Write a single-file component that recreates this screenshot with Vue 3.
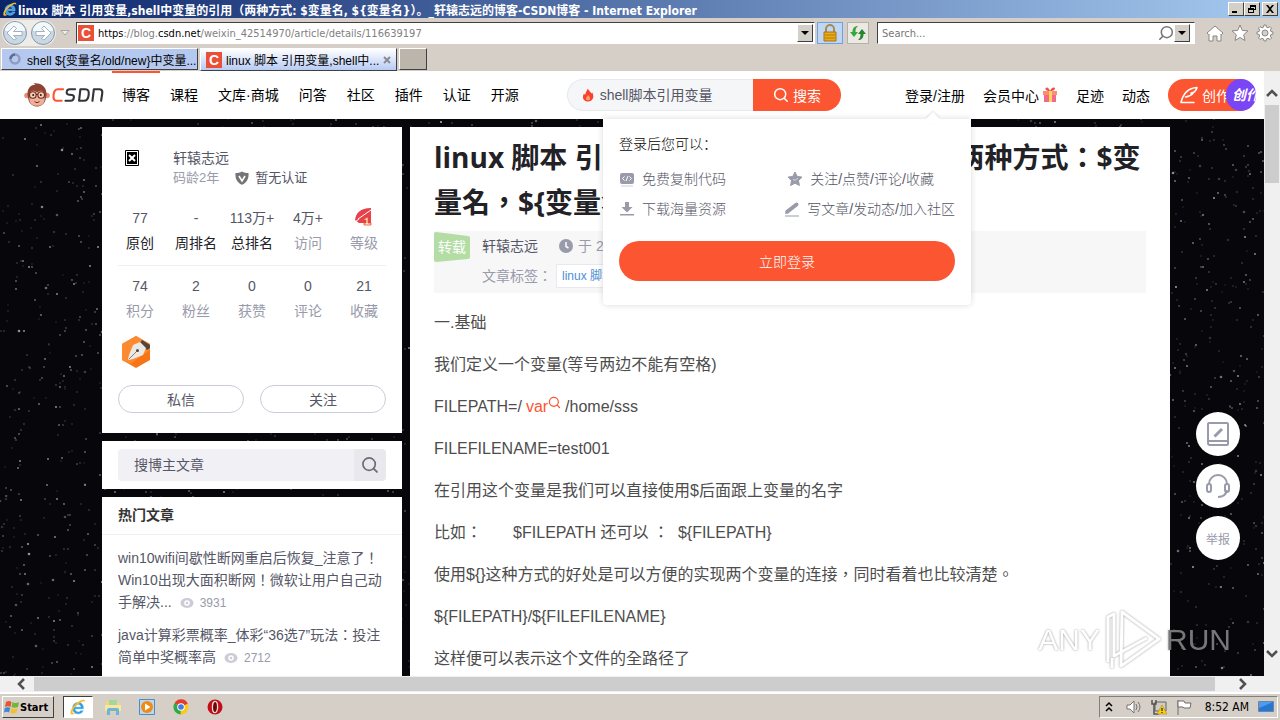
<template>
  <div class="screen">
    <!-- 公用图标 -->
    <svg class="symbols" aria-hidden="true">
      <symbol id="ie" viewBox="0 0 24 24">
        <path d="M19.6 14.6H8.4c.2 2.300 1.700 3.700 4 3.700 1.500 0 2.600-.6 3.300-1.700h3.600c-1 2.900-3.500 4.800-7 4.800-4.600 0-7.700-3.300-7.700-7.900C4.600 8.900 7.700 5.700 12.300 5.700c4.700 0 7.500 3.500 7.300 8.900zM8.500 12h7.300c-.2-2-1.600-3.200-3.600-3.200S8.800 10 8.500 12z" fill="#2d9be6" stroke="#a9dcf8" stroke-width=".7" />
        <path d="M2.600 21.600C-.6 17.500 8.700 5 17.500 2.700c3.200-.8 4.600.7 3.500 3.500.1-1.700-1.200-2.200-3.400-1.300C10.800 7.800 3.300 16.600 5 19.600c.6 1 2 .9 3.600.1-2.300 2.100-4.700 3.200-6 1.900z" fill="#f6bd2c" />
      </symbol>
      <symbol id="lens" viewBox="0 0 16 16">
        <circle cx="7.200" cy="7.200" r="5.500" fill="none" stroke="currentColor" stroke-width="1.500" />
        <path d="M11.200 11.200l3 3" fill="none" stroke="currentColor" stroke-width="1.600" stroke-linecap="round" />
      </symbol>
      <symbol id="eye" viewBox="0 0 14 12">
        <ellipse cx="7" cy="6" rx="6.500" ry="5" fill="#ccccd8" />
        <circle cx="7" cy="6" r="2.800" fill="#fff" />
        <circle cx="7" cy="6" r="1.300" fill="#ccccd8" />
      </symbol>
    </svg>

    <!-- 窗口标题栏 -->
    <header class="titlebar">
      <svg class="icon16"><use href="#ie" /></svg>
      <span class="titlebar-text">linux 脚本 引用变量,shell中变量的引用（两种方式: $变量名, ${变量名}）。_轩辕志远的博客-CSDN博客 - Internet Explorer</span>
      <div class="win-btns">
        <button aria-label="最小化"><svg viewBox="0 0 10 8"><path d="M1 6h5v2H1z" /></svg></button>
        <button aria-label="还原"><svg viewBox="0 0 10 8"><path d="M3 0h6v5H7v3H1V3h2zM4 2v1h3v1h1V2zM2 5v2h4V5z" fill-rule="evenodd" /></svg></button>
        <button class="win-close" aria-label="关闭"><svg viewBox="0 0 10 8"><path d="M1 0h2l2 2.500L7 0h2L6 4l3 4H7L5 5.500 3 8H1l3-4z" /></svg></button>
      </div>
    </header>

    <!-- 地址栏 -->
    <div class="toolbar">
      <div class="nav-arrows">
        <button aria-label="后退">
          <svg viewBox="0 0 26 26"><circle cx="13" cy="13" r="11.500" fill="#c9d8e4" stroke="#8797a5" /><path d="M3 11a10 9 0 0 1 20 0z" fill="#f3f8fb" /><path d="M5 13l7-7 2.500 2.500-3 3H20v4h-8.500l3 3L12 20z" fill="#fff" stroke="#8fa2b2" stroke-width=".8" /></svg>
        </button>
        <button aria-label="前进">
          <svg viewBox="0 0 26 26"><circle cx="13" cy="13" r="11.500" fill="#c9d8e4" stroke="#8797a5" /><path d="M3 11a10 9 0 0 1 20 0z" fill="#f3f8fb" /><path d="M21 13l-7-7-2.500 2.500 3 3H6v4h8.500l-3 3L14 20z" fill="#fff" stroke="#8fa2b2" stroke-width=".8" /></svg>
        </button>
      </div>
      <svg class="nav-more" viewBox="0 0 10 6"><path d="M1 .5h8L5 5z" fill="#eee" stroke="#aaa59c" /></svg>
      <div class="field address">
        <span class="favicon">C</span>
        <div class="address-edit">
          <input
            aria-label="地址"
            :value="editing ? url : ''"
            @focus="editing = true"
            @blur="editing = false"
          />
          <div v-if="!editing" class="address-show"><b>https</b>://blog.<b>csdn.net</b>/weixin_42514970/article/details/116639197</div>
        </div>
        <button class="drop" aria-label="历史记录"><svg viewBox="0 0 8 4"><path d="M0 0h8L4 4z" /></svg></button>
      </div>
      <button class="tool-btn active" aria-label="安全报告">
        <svg viewBox="0 0 18 18"><path d="M5 8V5a4 4 0 0 1 8 0v3" fill="none" stroke="#a98b4c" stroke-width="2" /><path d="M3 8h12v9H3z" fill="#e8a91d" stroke="#a8740b" /><path d="M4 11h10M4 14h10" stroke="#b97d08" /></svg>
      </button>
      <button class="tool-btn" aria-label="刷新">
        <svg viewBox="0 0 18 18"><path d="M1 8h2.500c0-4 2-6 5.500-6-2 1.500-2.500 3-2.500 6H9l-4 5z" fill="#35a83b" /><path d="M17 10h-2.500c0 4-2 6-5.500 6 2-1.500 2.500-3 2.500-6H9l4-5z" fill="#26862c" /></svg>
      </button>
      <div class="field search-field">
        <input type="text" placeholder="Search..." aria-label="Search" />
        <svg class="icon16 flip"><use href="#lens" /></svg>
        <button class="drop" aria-label="搜索选项"><svg viewBox="0 0 8 4"><path d="M0 0h8L4 4z" /></svg></button>
      </div>
      <div class="ie-tools">
        <button aria-label="主页"><svg viewBox="0 0 18 18"><path d="M9 2l8 7-1.500 1.500L15 10v7h-4v-5H7v5H3v-7l-.500.500L1 9z" /></svg></button>
        <button aria-label="收藏夹"><svg viewBox="0 0 18 18"><path d="M9 1l2.300 5.400 5.700.5-4.300 3.900 1.300 5.700L9 13.500 4 16.500l1.300-5.700L1 6.900l5.700-.5z" /></svg></button>
        <button aria-label="工具"><svg viewBox="0 0 18 18"><path d="M8 1h2l.5 2.200 1.500.6 2-1.200 1.500 1.500-1.200 2 .6 1.400L17 8v2l-2.100.5-.6 1.500 1.200 2-1.500 1.500-2-1.200-1.500.6L10 17H8l-.5-2.100-1.500-.6-2 1.200L2.500 14l1.200-2-.6-1.500L1 10V8l2.100-.5.6-1.400-1.200-2L4 2.600l2 1.200 1.500-.6zM9 6a3 3 0 1 0 0 6 3 3 0 0 0 0-6z" fill-rule="evenodd" /></svg></button>
      </div>
    </div>

    <!-- 标签页 -->
    <div class="tabs">
      <button class="tab">
        <svg class="icon16" viewBox="0 0 16 16"><circle cx="8" cy="8" r="4.500" fill="none" stroke="#8f9cc0" stroke-width="2.500" /><path d="M3.500 8A4.500 4.500 0 0 1 8 3.500" fill="none" stroke="#5d6b93" stroke-width="2.500" /></svg>
        <span>shell ${变量名/old/new}中变量...</span>
      </button>
      <button class="tab current">
        <span class="favicon">C</span>
        <span>linux 脚本 引用变量,shell中...</span>
        <svg class="tab-close" viewBox="0 0 8 8"><path d="M1 1l6 6M7 1L1 7" stroke="#8a8a94" stroke-width="2" /></svg>
      </button>
      <button class="tab-new" aria-label="新标签页"></button>
    </div>

    <div class="viewport">
      <div class="page">
        <svg class="stars" aria-hidden="true">
          <circle v-for="(s, i) in stars" :key="i" :cx="s.x" :cy="s.y" :r="s.r" :opacity="s.o" fill="#c4c8d0" />
        </svg>

        <!-- CSDN 顶部导航 -->
        <div class="csdn-bar">
          <a class="logo" href="#" aria-label="CSDN">
            <svg class="monkey" viewBox="0 0 26 24">
              <circle cx="3" cy="12.500" r="2.800" fill="#e58f76" /><circle cx="23" cy="12.500" r="2.800" fill="#e58f76" />
              <path d="M3.500 12C3 5 7.500 1.500 11.500 1.800L9.500.3C15-.5 23 2 22.500 12l-1 5c-1 4-5 6.500-8.500 6.500S5.500 21 4.500 17z" fill="#8f4231" />
              <path d="M5 12.500c0-5.500 5.500-6 8-3 2.500-3 8-2.500 8 3 0 1.500-.5 3-.5 4.500 0 4-4 5.800-7.500 5.800S5.500 21 5.500 17c0-1.500-.5-3-.5-4.500z" fill="#eeb09a" />
              <circle cx="8.800" cy="12" r="3.300" fill="#f6cdbb" stroke="#6b2c20" stroke-width="1.100" /><circle cx="17.200" cy="12" r="3.300" fill="#f6cdbb" stroke="#6b2c20" stroke-width="1.100" />
              <circle cx="9.200" cy="12" r="1" fill="#321510" /><circle cx="16.800" cy="12" r="1" fill="#321510" />
              <path d="M12 11.500h2M10.500 18.500c2 1.500 3 1.500 5 0" fill="none" stroke="#6b2c20" />
            </svg>
            <svg class="wordmark" viewBox="0 0 54 18" fill="none" stroke-width="2.200" stroke-linecap="round" stroke-linejoin="round">
              <path d="M11.500 3H6C3 3 2 5 1.600 9s.6 6 3 6h5.400" stroke="#fc5531" />
              <path d="M24 3h-5.500c-2 0-3 1-3.200 2.600-.3 2 .6 3 2.400 3.100l3.200.3c1.500.2 2 1.200 1.800 2.700-.3 2.200-1.300 3.300-3.200 3.300h-5.500M29.500 3h5c3 0 4 1.700 3.600 5.500-.4 4.500-2 6.500-5 6.500h-5zM42 15l1.500-12h5.500c2.500 0 3.500 1.500 3.200 4L51 15" stroke="#333438" />
            </svg>
          </a>
          <nav class="main-nav">
            <a v-for="item in navs" :key="item" href="#" :class="{ on: item === '博客' }">{{ item }}</a>
          </nav>
          <div class="site-search">
            <div class="search-box">
              <svg class="fire" viewBox="0 0 12 14"><path d="M6 .5c.4 2 3 3.500 3.200 5 .6-.3.800-.8.900-1.300C12.500 8 11.500 13 6 13.500.5 13 0 8.500 2 5.500c.4.800.7 1.200 1.200 1.300C3.500 4.500 5 2.500 6 .5z" fill="#f7402f" /><path d="M6 7c2 2 2.500 3 2 4.500C7.500 12.500 4.500 12.500 4 11.500 3.500 10 5 8.500 6 7z" fill="#ff9b6a" /></svg>
              <input type="text" placeholder="shell脚本引用变量" aria-label="搜索内容" />
            </div>
            <button><svg class="icon16"><use href="#lens" /></svg>搜索</button>
          </div>
          <div class="user-nav">
            <a href="#">登录/注册</a>
            <a class="vip" href="#">会员中心
              <svg class="gift" viewBox="0 0 16 16"><path d="M2 7h12v8H2z" fill="#f2698c" /><path d="M1 4h14v4H1z" fill="#fa8f6c" /><path d="M7 4h3v11H7z" fill="#ffd558" /><path d="M8 4C2 4 3 0 5 .5S8 4 8 4s1-3 3.500-3.500S14 4 8 4z" fill="#ef4f58" /></svg>
            </a>
            <a href="#">足迹</a>
            <a href="#">动态</a>
            <button class="create">
              <svg viewBox="0 0 18 18" fill="none" stroke="#fff" stroke-width="1.600" stroke-linecap="round" stroke-linejoin="round"><path d="M1 16.500C3 8 8 2 17 1.500c-1 3.500-3 5.500-6 5.500M14 6c-2.500 3.500-5 4.500-8.500 5M1 16.500h13" /></svg>
              <span>创作</span>
              <i class="create-ad">创作</i>
            </button>
          </div>

          <!-- 登录提示浮层 -->
          <div class="login-pop">
            <p class="pop-title">登录后您可以：</p>
            <ul>
              <li>
                <svg viewBox="0 0 16 16"><rect x="1" y="2" width="14" height="11" rx="2" fill="#999aaa" /><path d="M2 15h12" stroke="#ccccd8" /><path d="M5.500 5.500L3.500 7.500l2 2M10.500 5.500l2 2-2 2M9 5L7 10" fill="none" stroke="#fff" /></svg>
                免费复制代码
              </li>
              <li class="inset">
                <svg viewBox="0 0 16 16"><path d="M8 1l2.200 4.400 4.800.7-3.500 3.500.9 4.900L8 12.200l-4.400 2.300.9-4.900L1 6.100l4.800-.7z" fill="#999aaa" stroke="#999aaa" stroke-linejoin="round" /><path d="M6 8l2 1.500L11 7" fill="none" stroke="#d8d8e2" /></svg>
                关注/点赞/评论/收藏
              </li>
              <li>
                <svg viewBox="0 0 16 16"><path d="M6 1h4v5h3.500L8 11.500 2.500 6H6zM1 13h14v1.500H1z" fill="#999aaa" /></svg>
                下载海量资源
              </li>
              <li>
                <svg viewBox="0 0 16 16"><path d="M3.500 10.500l9-7" stroke="#999aaa" stroke-width="4" stroke-linecap="round" /><path d="M1 13l1-4 3 3z" fill="#999aaa" /><path d="M1 15h14" stroke="#999aaa" /></svg>
                写文章/发动态/加入社区
              </li>
            </ul>
            <button>立即登录</button>
          </div>
        </div>

        <div class="content">
          <aside>
            <section class="card profile">
              <div class="who">
                <svg class="avatar" viewBox="0 0 14 16"><path d="M.500.500h13v15H.5z" fill="#fff" stroke="#000" /><path d="M2 2h10v12H2z" fill="#000" /><path d="M4 5l6 6M10 5l-6 6" stroke="#fff" stroke-width="2" /></svg>
                <div>
                  <a class="name" href="#">轩辕志远</a>
                  <div class="auth">
                    <span class="age">码龄2年</span>
                    <svg viewBox="0 0 14 14"><path d="M7 .5C9 2 11 2 13.500 2c.5 5-1.500 10-6.500 11.700C2 12 0 7 .5 2 3 2 5 2 7 .5z" fill="#737378" /><path d="M4 5l3 5 3-5" fill="none" stroke="#fff" stroke-width="1.600" /></svg>
                    <span>暂无认证</span>
                  </div>
                </div>
              </div>
              <dl class="stats first">
                <div v-for="s in topStats" :key="s.label" :class="{ dark: s.dark }">
                  <dd>
                    <template v-if="s.value">{{ s.value }}</template>
                    <svg v-else class="level" viewBox="0 0 20 20"><path d="M1 13C2 6 6 1 17 1v15H5z" fill="#e8414b" /><path d="M4 12L17 3M1 15l4-3" stroke="#fff" /><path d="M10 12l4-2v6h3v2h-7v-2h2v-3h-2z" fill="#ffe9bc" stroke="#e24b33" stroke-width=".8" /></svg>
                  </dd>
                  <dt>{{ s.label }}</dt>
                </div>
              </dl>
              <dl class="stats">
                <div v-for="s in bottomStats" :key="s.label">
                  <dd>{{ s.value }}</dd>
                  <dt>{{ s.label }}</dt>
                </div>
              </dl>
              <svg class="medal" viewBox="0 0 28 32"><path d="M14 0l14 8v16l-14 8-14-8V8z" fill="#f77516" /><path d="M14 0l14 8v6L8 28 0 24V8z" fill="#fb8a31" /><path d="M20 4l8 5v3l-3 2-7-7z" fill="#54463f" /><path d="M18 6l6 6-3 7-10 4-4 1-1-1 1-4 4-10z" fill="#ece8e3" /><path d="M7 23l8-8" stroke="#8a7d72" /><circle cx="15.500" cy="14.500" r="1.500" fill="#4f4b48" /></svg>
              <div class="actions">
                <button>私信</button>
                <button>关注</button>
              </div>
            </section>

            <section class="card blog-search">
              <input type="text" placeholder="搜博主文章" aria-label="搜博主文章" />
              <button aria-label="搜索"><svg><use href="#lens" /></svg></button>
            </section>

            <section class="card hot">
              <h3>热门文章</h3>
              <ul>
                <li v-for="h in hots" :key="h.count">
                  <a href="#">{{ h.title }}</a>
                  <span><svg><use href="#eye" /></svg>{{ h.count }}</span>
                </li>
              </ul>
            </section>
          </aside>

          <main class="card article">
            <h1>linux 脚本 引用变量,shell中变量的引用（两种方式：$变量名，${变量名}）。</h1>
            <div class="info">
              <div class="stamp">
                <svg viewBox="0 0 36 32"><path d="M2 1l32 4q2 0 2 2v19q0 2-2 2L2 31q-2 0-2-2V3q0-2 2-2z" fill="#b3dda4" /></svg>
                <span>转载</span>
              </div>
              <div>
                <div class="info-row">
                  <a href="#">轩辕志远</a>
                  <svg class="icon16" viewBox="0 0 16 16"><circle cx="8" cy="8" r="7" fill="#999aaa" /><path d="M8 4v4.500l2.500 1.500" fill="none" stroke="#fff" stroke-width="1.500" /></svg>
                  <span>于 2021-05-12</span>
                </div>
                <div class="info-row">
                  <span>文章标签：</span>
                  <a class="tag" href="#">linux 脚本 引用变量</a>
                </div>
              </div>
            </div>
            <div class="body">
              <p>一.基础</p>
              <p>我们定义一个变量(等号两边不能有空格)</p>
              <p>FILEPATH=/<a class="kw" href="#">var<svg><use href="#lens" /></svg></a>/home/sss</p>
              <p>FILEFILENAME=test001</p>
              <p>在引用这个变量是我们可以直接使用$后面跟上变量的名字</p>
              <p class="pre">比如：{{ gap }}$FILEPATH 还可以 ：{{ '  ' }}${FILEPATH}</p>
              <p>使用${}这种方式的好处是可以方便的实现两个变量的连接，同时看着也比较清楚。</p>
              <p>${FILEPATH}/${FILEFILENAME}</p>
              <p>这样便可以表示这个文件的全路径了</p>
            </div>
          </main>
        </div>

        <div class="side-tools">
          <button aria-label="写文章">
            <svg viewBox="0 0 24 26" fill="none" stroke="#999aaa" stroke-width="2"><path d="M3 2h18a1 1 0 0 1 1 1v20a1 1 0 0 1-1 1H4a2 2 0 0 1-2-2V3a1 1 0 0 1 1-1zM2 20h20" /><path d="M8.500 15.500l7.500-7.500" stroke-width="3" /></svg>
          </button>
          <button aria-label="客服">
            <svg viewBox="0 0 24 26" fill="none" stroke="#999aaa" stroke-width="2"><path d="M3 11a9 9 0 0 1 18 0M21 17c-1 5-4 7-9 7" /><rect x="1" y="11" width="4" height="8" rx="2" /><rect x="19" y="11" width="4" height="8" rx="2" /></svg>
          </button>
          <button>举报</button>
        </div>

        <div class="watermark">
          <span>ANY</span>
          <svg viewBox="0 0 56 64" fill="none" stroke="#fff" stroke-width="3" stroke-linejoin="round"><path d="M17 4l37 27-38 27z" /><path d="M3 54V9l6-3v42l33-18M7 60V50" /></svg>
          <span class="run">RUN</span>
        </div>
      </div>
      <div class="vscroll">
        <svg viewBox="0 0 12 8"><path d="M1 7l5-5 5 5" /></svg>
        <div class="vthumb"></div>
        <svg viewBox="0 0 12 8"><path d="M1 1l5 5 5-5" /></svg>
      </div>
    </div>

    <div class="hscroll">
      <svg viewBox="0 0 8 12"><path d="M7 1L2 6l5 5" /></svg>
      <div class="hthumb"></div>
      <svg viewBox="0 0 8 12"><path d="M1 1l5 5-5 5" /></svg>
    </div>

    <!-- 任务栏 -->
    <footer class="taskbar">
      <button class="start">
        <svg viewBox="0 0 16 16"><path d="M2 3c2-1.500 4-1 5.500 0L6.500 8C5 7 3 7 1 8z" fill="#e8542c" /><path d="M8.500 3.300c2 1 4 1 6.500 0L14 8c-2 1-4 1-6.500.3z" fill="#71b63a" /><path d="M.8 9c2-1 4-1 5.500 0L5 13.500C3.500 12.500 2 12.500 0 13.500z" fill="#3f87d8" /><path d="M7.300 9.300c2 1 4 1 6.400 0l-1.200 4.500c-2 1-4 1-6.200.2z" fill="#f5bf2d" /></svg>
        Start
      </button>
      <button class="task running" aria-label="Internet Explorer"><svg><use href="#ie" /></svg></button>
      <button class="task" aria-label="资源管理器"><svg viewBox="0 0 18 18"><path d="M2 3h6l1 2h7v9H2z" fill="#f0d77a" /><path d="M5 2h8v5H5z" fill="#a6d69b" /><path d="M1 7h16v6H1z" fill="#f7e7a0" /><path d="M3 17v-5q0-2 2-2h8q2 0 2 2v5h-3v-4H6v4z" fill="#6bb5dc" /></svg></button>
      <button class="task" aria-label="Media Player"><svg viewBox="0 0 18 18"><path d="M1.500 1.500h15v15h-15z" fill="#b9d9f3" stroke="#4d8dc4" /><circle cx="9" cy="9" r="6" fill="#f08a12" /><path d="M7 5.500L12.500 9 7 12.500z" fill="#fff" /></svg></button>
      <button class="task" aria-label="Chrome"><svg viewBox="0 0 18 18"><circle cx="9" cy="9" r="7.500" fill="#fbc919" /><path d="M9 9L2.500 5.200a7.500 7.500 0 0 1 13.300.3z" fill="#e33b2e" /><path d="M9 9l-6.500-3.800A7.500 7.500 0 0 0 8.500 16.500z" fill="#2da94f" /><circle cx="9" cy="9" r="3.800" fill="#fff" /><circle cx="9" cy="9" r="2.800" fill="#3f7de8" /></svg></button>
      <button class="task" aria-label="Opera"><svg viewBox="0 0 18 18"><circle cx="9" cy="9" r="7.500" fill="#c00f16" /><ellipse cx="9" cy="9" rx="2.600" ry="5.700" fill="#6d0509" stroke="#f4dada" stroke-width="1.300" /></svg></button>
      <div class="tray">
        <svg viewBox="0 0 16 16" fill="none" stroke="#000" stroke-width="1.500"><path d="M5 7l3-3 3 3M5 12l3-3 3 3" /></svg>
        <svg viewBox="0 0 16 16" fill="#fff" stroke="#77736d"><path d="M1 6h3l4-4v12l-4-4H1z" /><path d="M10 5q2 3 0 6M12 3q4 5 0 10" fill="none" /></svg>
        <svg viewBox="0 0 16 16"><path d="M4 3h11v9H4z" fill="#cfccc6" stroke="#64625e" /><path d="M1 1v4h4V1M3 5v10h5" fill="none" stroke="#55534f" stroke-width="1.500" /><path d="M11 6l5 9H6z" fill="#f8cf1b" stroke="#b88b00" stroke-width=".6" /><path d="M11 9v3M11 13v1" stroke="#000" /></svg>
        <svg viewBox="0 0 16 16" fill="#fff" stroke="#6f6b66"><path d="M2 1v15" /><path d="M2 2h6l1 2h6l-1 5H8L7 8H2z" /></svg>
        <time>8:52 AM</time>
        <svg class="desk" viewBox="0 0 16 16"><path d="M.500 2.500h15v10H.5z" fill="#2876d2" stroke="#6d87a0" /><path d="M1 3h14L1 9z" fill="#4e9cec" /><path d="M3 13h5v2H3z" fill="#b6d4ef" /></svg>
      </div>
    </footer>
  </div>
</template>

<script setup>
import { ref } from 'vue'

const url = 'https://blog.csdn.net/weixin_42514970/article/details/116639197'
// 地址栏是否处于编辑状态
const editing = ref(false)

const navs = ['博客', '课程', '文库·商城', '问答', '社区', '插件', '认证', '开源']

const topStats = [
  { value: '77', label: '原创', dark: true },
  { value: '-', label: '周排名', dark: true },
  { value: '113万+', label: '总排名', dark: true },
  { value: '4万+', label: '访问' },
  { value: '', label: '等级' }
]

const bottomStats = [
  { value: '74', label: '积分' },
  { value: '2', label: '粉丝' },
  { value: '0', label: '获赞' },
  { value: '0', label: '评论' },
  { value: '21', label: '收藏' }
]

const hots = [
  { title: 'win10wifi间歇性断网重启后恢复_注意了！Win10出现大面积断网！微软让用户自己动手解决...', count: 3931 },
  { title: 'java计算彩票概率_体彩“36选7”玩法：投注简单中奖概率高', count: 2712 }
]

// 正文里的连续空格
const gap = ' '.repeat(7)

/**
 * 星空背景
 * 用固定种子生成，保证每次渲染位置一致
 */
let seed = 20210512
function rand() {
  seed = (seed * 16807) % 2147483647
  return seed / 2147483647
}
const stars = Array.from({ length: 12000 }, () => ({
  x: Math.round(rand() * 1920),
  y: Math.round(rand() * 1080),
  r: rand() > 0.93 ? 1.3 : 0.9,
  o: 0.12 + rand() * rand() * 0.85
}))
</script>

<style>
body {
  margin: 0;
  overflow: hidden;
}
</style>

<style scoped>
.screen {
  display: flex;
  flex-direction: column;
  height: 100vh;
  background: #d5cfc8;
  color: #000;
  font-family: "Liberation Sans", "Noto Sans CJK SC", sans-serif;
  font-size: 14px;
}
.screen * {
  box-sizing: border-box;
}
.symbols {
  position: absolute;
  width: 0;
  height: 0;
}
button {
  padding: 0;
  border: none;
  background: none;
  color: inherit;
  font: inherit;
  cursor: pointer;
}
input {
  min-width: 0;
  padding: 0;
  border: none;
  outline: none;
  background: transparent;
  font: inherit;
}
a {
  color: inherit;
  text-decoration: none;
}
ul, dl, dd, p, h1, h3 {
  margin: 0;
  padding: 0;
  list-style: none;
}
svg {
  flex: none;
}
.icon16 {
  width: 16px;
  height: 16px;
}

/* 标题栏 */
.titlebar {
  display: flex;
  align-items: center;
  height: 18px;
  padding: 0 2px;
  background: linear-gradient(90deg, #0a246a, #a6caf0);
  color: #fff;
  font-family: "DejaVu Sans Condensed", "Noto Sans CJK SC", sans-serif;
  font-size: 12px;
  font-weight: 700;
}
.titlebar-text {
  flex: 1;
  white-space: nowrap;
  overflow: hidden;
}
.win-btns {
  display: flex;
}
.win-btns button, .drop {
  display: flex;
  align-items: center;
  justify-content: center;
  width: 16px;
  height: 14px;
  background: #d4d0c8;
  border: 1px solid;
  border-color: #fff #404040 #404040 #fff;
}
.win-btns svg {
  width: 10px;
  height: 8px;
}
.win-btns .win-close {
  margin-left: 2px;
}

/* 地址栏 */
.toolbar {
  display: flex;
  align-items: center;
  height: 30px;
  padding: 0 6px 0 2px;
  font-family: "DejaVu Sans Condensed", sans-serif;
  font-size: 11px;
}
.nav-arrows {
  display: flex;
  gap: 2px;
  border-radius: 13px;
  background: #eeece9;
}
.nav-arrows button, .nav-arrows svg {
  display: block;
  width: 26px;
  height: 26px;
}
.nav-more {
  width: 10px;
  height: 6px;
  margin: 0 6px 0 4px;
}
.field {
  display: flex;
  align-items: center;
  height: 22px;
  background: #fff;
  border: 1px solid;
  border-color: #404040 #fff #fff #404040;
}
.address {
  flex: 1;
  padding: 0 1px;
}
.favicon {
  flex: none;
  width: 16px;
  height: 16px;
  background: #ea4f38;
  color: #fff;
  font-family: "Liberation Sans", sans-serif;
  font-size: 14px;
  font-weight: 700;
  line-height: 16px;
  text-align: center;
}
.address-edit {
  position: relative;
  flex: 1;
  margin-left: 4px;
}
.address-edit input {
  display: block;
  width: 100%;
}
.address-show {
  position: absolute;
  inset: 0;
  color: #808080;
  pointer-events: none;
  white-space: nowrap;
}
.address-show b {
  color: #000;
  font-weight: 400;
}
.drop {
  height: 18px;
}
.drop svg {
  width: 8px;
  height: 4px;
}
.tool-btn {
  display: flex;
  align-items: center;
  justify-content: center;
  width: 22px;
  height: 22px;
  margin-left: 4px;
  background: #ece9e4;
  border: 1px solid #b5b0a8;
}
.tool-btn.active {
  width: 26px;
  margin-left: 2px;
  background: #bfd7f5;
  border-color: #6ea2df;
}
.tool-btn svg {
  width: 18px;
  height: 18px;
}
.search-field {
  width: 25%;
  margin-left: 8px;
  padding: 0 4px;
  color: #777;
}
.search-field input {
  flex: 1;
}
.search-field input::placeholder {
  color: #777;
}
.flip {
  transform: scaleX(-1);
}
.ie-tools {
  display: flex;
  gap: 7px;
  margin-left: 11px;
}
.ie-tools svg {
  display: block;
  width: 18px;
  height: 18px;
  fill: #fff;
  stroke: #8b8781;
}

/* 标签页 */
.tabs {
  display: flex;
  gap: 2px;
  height: 23px;
  padding-left: 1px;
  font-size: 12px;
}
.tab, .tab-new {
  display: flex;
  align-items: center;
  width: 197px;
  height: 22px;
  padding: 0 5px;
  background: #b5c9f0;
  border: 1px solid;
  border-color: #fff #404040 #404040 #fff;
}
.tab span {
  white-space: nowrap;
}
.tab > span:nth-child(2) {
  flex: 1;
  margin-left: 4px;
  text-align: left;
}
.tab.current {
  height: 23px;
  background: linear-gradient(#fff, #b7cbf4);
}
.tab-close {
  width: 8px;
  height: 8px;
}
.tab-new {
  width: 28px;
  background: #bcb5ac;
}

/* 页面区域 */
.viewport {
  display: flex;
  flex: 1;
  min-height: 0;
}
.page {
  position: relative;
  flex: 1;
  min-width: 0;
  overflow: hidden;
  background: #07060b;
}
.stars {
  position: absolute;
  width: 100%;
  height: 100%;
}
.csdn-bar {
  position: relative;
  z-index: 2;
  display: flex;
  align-items: center;
  height: 48px;
  padding: 0 8px 0 24px;
  background: #fff;
}
.logo {
  display: flex;
  align-items: center;
  gap: 2px;
  margin-right: 18px;
}
.monkey {
  width: 26px;
  height: 24px;
}
.wordmark {
  width: 52px;
  height: 18px;
}
.main-nav {
  display: flex;
  gap: 20px;
}
.main-nav a {
  position: relative;
  line-height: 48px;
  white-space: nowrap;
}
.main-nav .on::before {
  content: "";
  position: absolute;
  top: 0;
  left: -10px;
  right: -10px;
  height: 2px;
  background: #fc5531;
}
.site-search {
  display: flex;
  flex: 1;
  min-width: 0;
  height: 32px;
  margin: 0 64px 0 48px;
}
.search-box {
  display: flex;
  flex: 1;
  align-items: center;
  gap: 6px;
  min-width: 0;
  padding-left: 14px;
  background: #f5f6f7;
  border: 1px solid #e8e8ed;
  border-right: none;
  border-radius: 16px 0 0 16px;
}
.search-box input {
  flex: 1;
}
.search-box input::placeholder {
  color: #555666;
}
.fire {
  width: 12px;
  height: 14px;
}
.site-search button {
  display: flex;
  align-items: center;
  justify-content: center;
  gap: 4px;
  width: 88px;
  background: #fc5531;
  border-radius: 0 16px 16px 0;
  color: #fff;
}
.user-nav {
  display: flex;
  align-items: center;
  gap: 18px;
  white-space: nowrap;
}
.user-nav .vip {
  display: flex;
  align-items: center;
  gap: 3px;
}
.gift {
  width: 16px;
  height: 16px;
}
.create {
  position: relative;
  display: flex;
  align-items: center;
  gap: 4px;
  width: 88px;
  height: 32px;
  padding-left: 12px;
  background: #fc5531;
  border-radius: 16px;
  color: #fff;
}
.create svg {
  width: 18px;
  height: 18px;
}
.create-ad {
  position: absolute;
  top: 0;
  right: 0;
  width: 30px;
  height: 32px;
  padding-left: 6px;
  overflow: hidden;
  background: #7a45f5;
  border-radius: 16px;
  font-weight: 700;
  line-height: 32px;
  text-align: left;
}

/* 登录浮层 */
.login-pop {
  position: absolute;
  top: 48px;
  right: 293px;
  width: 368px;
  padding: 15px 16px 24px;
  background: #fff;
  border-radius: 0 0 4px 4px;
  box-shadow: 0 0 6px rgba(0, 0, 0, 0.15);
  font-weight: 300;
}
.login-pop::before {
  content: "";
  position: absolute;
  top: -5px;
  right: 33px;
  width: 10px;
  height: 10px;
  background: #fff;
  box-shadow: -1px -1px 2px rgba(0, 0, 0, 0.1);
  transform: rotate(45deg);
}
.pop-title {
  line-height: 20px;
}
.login-pop ul {
  display: grid;
  grid-template-columns: 1fr auto;
  margin: 10px 0 17px;
  color: #555666;
  line-height: 30px;
}
.login-pop li {
  display: flex;
  align-items: center;
  gap: 7px;
}
.login-pop .inset {
  padding-left: 3px;
}
.login-pop li svg {
  width: 16px;
  height: 16px;
}
.login-pop button {
  width: 100%;
  height: 40px;
  background: #fc5531;
  border-radius: 20px;
  color: #fff;
}

/* 主体 */
.content {
  position: relative;
  display: flex;
  gap: 8px;
  padding: 8px 94px 0 102px;
}
.card {
  background: #fff;
}
aside {
  display: flex;
  flex: none;
  flex-direction: column;
  gap: 8px;
  width: 300px;
}
.profile {
  padding: 20px 16px;
}
.who {
  display: flex;
  gap: 34px;
  height: 58px;
  padding-left: 7px;
  color: #555666;
}
.avatar {
  width: 14px;
  height: 16px;
  margin-top: 3px;
}
.name {
  display: block;
  line-height: 22px;
}
.auth {
  display: flex;
  align-items: center;
  font-size: 13px;
  line-height: 18px;
}
.auth .age {
  color: #999aaa;
}
.auth svg {
  width: 14px;
  height: 14px;
  margin: 0 6px 0 16px;
}
.stats {
  display: grid;
  grid-template-columns: repeat(5, 56px);
  justify-content: center;
  padding-top: 7px;
  line-height: 26px;
  text-align: center;
}
.stats.first {
  padding: 0 0 9px;
  border-bottom: 1px solid #f0f0f2;
}
.stats div {
  display: flex;
  flex-direction: column;
}
.stats dd {
  height: 25px;
  color: #555666;
  white-space: nowrap;
}
.stats dt {
  color: #999aaa;
}
.stats .dark dt {
  color: #222226;
}
.level {
  width: 20px;
  height: 20px;
  margin-top: 2px;
}
.medal {
  display: block;
  width: 28px;
  height: 32px;
  margin: 12px 4px 17px;
}
.actions {
  display: flex;
  gap: 16px;
}
.actions button {
  flex: 1;
  height: 28px;
  border: 1px solid #ccccd8;
  border-radius: 14px;
  color: #555666;
}
.blog-search {
  display: flex;
  padding: 8px 16px;
}
.blog-search input {
  flex: 1;
  height: 32px;
  padding-left: 16px;
  background: #f0f0f5;
  border-radius: 4px 0 0 4px;
}
.blog-search input::placeholder {
  color: #555666;
}
.blog-search button {
  display: flex;
  align-items: center;
  justify-content: center;
  width: 32px;
  background: #e8e8ed;
  border-radius: 0 4px 4px 0;
  color: #6b6c78;
}
.blog-search svg {
  width: 18px;
  height: 18px;
}
/* 标点居中的字体 */
.hot, .article {
  font-family: "Liberation Sans", "Noto Sans CJK TC", sans-serif;
}
.hot h3 {
  padding: 0 16px;
  border-bottom: 1px solid #f0f0f2;
  color: #333;
  font-size: 14px;
  line-height: 37px;
}
.hot ul {
  display: flex;
  flex-direction: column;
  gap: 10px;
  padding: 12px 16px;
}
.hot li {
  color: #555666;
  line-height: 22px;
}
.hot li span {
  margin-left: 4px;
  color: #999aaa;
  font-size: 12px;
}
.hot svg {
  width: 14px;
  height: 12px;
  margin: 0 6px 0 4px;
  vertical-align: -2px;
}

/* 文章 */
.article {
  flex: 1;
  min-width: 0;
  height: 800px;
  padding: 8px 24px;
}
.article h1 {
  color: #222226;
  font-family: "Open Sans", "Noto Sans CJK TC", sans-serif;
  font-size: 28px;
  font-weight: 700;
  line-height: 45px;
}
.info {
  display: flex;
  gap: 12px;
  height: 62px;
  margin: 6px 0 17px;
  background: #f7f7f8;
  color: #999aaa;
}
.stamp {
  position: relative;
  width: 36px;
  height: 32px;
  color: #fff;
  line-height: 32px;
  text-align: center;
}
.stamp svg {
  position: absolute;
  inset: 0;
}
.stamp span {
  position: relative;
}
.info-row {
  display: flex;
  align-items: center;
  height: 30px;
  line-height: 22px;
}
.info-row a {
  color: #555666;
}
.info-row .icon16 {
  margin: 0 4px 0 20px;
}
.info-row .tag {
  margin-left: 4px;
  padding: 0 5px;
  background: #fff;
  border: 1px solid #e8e8ed;
  color: #4d8fd6;
  font-size: 12px;
}
.body {
  display: flex;
  flex-direction: column;
  gap: 16px;
  color: #4d4d4d;
  font-size: 16px;
  line-height: 26px;
}
.pre {
  white-space: pre-wrap;
}
.kw {
  margin: 0 4px;
  color: #fc5531;
}
.kw svg {
  width: 13px;
  height: 13px;
  vertical-align: 3px;
}

/* 右侧悬浮按钮 */
.side-tools {
  position: absolute;
  right: 24px;
  bottom: 116px;
  display: flex;
  flex-direction: column;
  gap: 8px;
}
.side-tools button {
  display: flex;
  align-items: center;
  justify-content: center;
  width: 44px;
  height: 44px;
  background: #fff;
  border-radius: 50%;
  color: #999aaa;
  font-size: 12px;
}
.side-tools svg {
  width: 24px;
  height: 26px;
}

/* 水印 */
.watermark {
  position: absolute;
  right: 33px;
  bottom: 4px;
  display: flex;
  align-items: center;
  gap: 5px;
  color: #fff;
  filter: drop-shadow(0 0 1px rgba(0, 0, 0, 0.4));
  font-size: 30px;
  pointer-events: none;
}
.watermark svg {
  width: 56px;
  height: 64px;
}
.watermark .run {
  color: #77777a;
}

/* 滚动条 */
.vscroll {
  display: flex;
  flex-direction: column;
  align-items: center;
  width: 16px;
  padding: 18px 0;
  background: #f0f0f0;
}
.vscroll svg, .hscroll svg {
  fill: none;
  stroke: #505050;
  stroke-width: 2.500;
}
.vscroll svg {
  width: 12px;
  height: 8px;
}
.vthumb {
  width: 14px;
  height: 78px;
  margin: 8px 0 auto;
  background: #cdcdcd;
}
.hscroll {
  display: flex;
  align-items: center;
  height: 16px;
  padding: 0 33px 0 17px;
  background: #f0f0f0;
}
.hscroll svg {
  width: 8px;
  height: 12px;
}
.hthumb {
  flex: 1;
  height: 14px;
  margin: 0 24px 0 9px;
  background: #cdcdcd;
}

/* 任务栏 */
.taskbar {
  display: flex;
  align-items: center;
  height: 28px;
  padding: 0 2px;
  border-top: 2px solid #fff;
  font-family: "DejaVu Sans Condensed", sans-serif;
  font-size: 12px;
}
.start {
  display: flex;
  align-items: center;
  width: 52px;
  height: 22px;
  margin-right: 9px;
  padding-left: 1px;
  border: 1px solid;
  border-color: #fff #404040 #404040 #fff;
  font-size: 11px;
  font-weight: 700;
}
.start svg {
  width: 16px;
  height: 16px;
}
.task {
  display: flex;
  align-items: center;
  justify-content: center;
  width: 28px;
  height: 22px;
  margin-right: 6px;
}
.task svg {
  width: 18px;
  height: 18px;
}
.task.running {
  width: 30px;
  background: #fff;
  border: 1px solid;
  border-color: #404040 #fff #fff #404040;
}
.tray {
  display: flex;
  align-items: center;
  gap: 9px;
  height: 22px;
  margin-left: auto;
  padding: 0 3px 0 1px;
  border: 1px solid;
  border-color: #808080 #fff #fff #808080;
}
.tray svg {
  width: 16px;
  height: 16px;
}
.tray time {
  margin-left: 4px;
}
</style>
